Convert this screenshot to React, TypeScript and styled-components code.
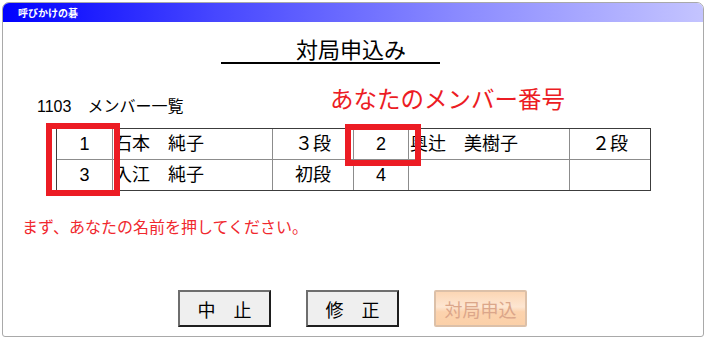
import React from "react";
import styled, { createGlobalStyle } from "styled-components";

const Global = createGlobalStyle`
  html, body { margin: 0; padding: 0; background: #ffffff; }
  body { font-family: "Liberation Sans", "Noto Sans CJK JP", sans-serif; }
  * { box-sizing: border-box; }
`;

const Page = styled.div`
  padding: 2px 0 0 2px;
`;

const Window = styled.div`
  width: 702px;
  height: 335px;
  border: 1px solid #a9a9a9;
  border-radius: 7px 7px 3px 3px;
  overflow: hidden;
  display: flex;
  flex-direction: column;
  background: #ffffff;
`;

const TitleBar = styled.div`
  height: 19px;
  flex: none;
  display: flex;
  align-items: center;
  padding-left: 15px;
  background: linear-gradient(to right, #0000ff 0%, #4646ff 30%, #8a8aff 65%, #c4c4ff 100%);
  color: #ffffff;
  font-family: "Noto Sans CJK JP", sans-serif;
  font-size: 10px;
  font-weight: bold;
  line-height: 12px;
`;

const Content = styled.div`
  flex: 1;
  display: flex;
  flex-direction: column;
  align-items: flex-start;
`;

const Heading = styled.div`
  margin: 13px 0 0 218px;
  width: 219px;
  border-bottom: 2px solid #000000;
  padding-left: 75px;
  font-family: "Noto Sans CJK JP", sans-serif;
  font-size: 22px;
  line-height: 27px;
  color: #000000;
  white-space: nowrap;
`;

const InfoRow = styled.div`
  display: flex;
  align-items: flex-start;
  margin: 20px 0 0 34px;
`;

const ListLabel = styled.div`
  width: 293px;
  margin-top: 13px;
  font-size: 16px;
  line-height: 20px;
  color: #000000;
  white-space: pre;
`;

const MemberHint = styled.div`
  font-family: "Noto Sans CJK JP", sans-serif;
  font-size: 23.5px;
  line-height: 28px;
  color: #ec1c24;
  white-space: nowrap;
`;

const TableWrap = styled.div`
  position: relative;
  margin: 11px 0 0 53px;
`;

const Grid = styled.div`
  display: grid;
  grid-template-columns: 56px 160px 81px 55px 161px 80px;
  grid-template-rows: 31px 30px;
  border: 1px solid #3c3c3c;
  width: 595px;
`;

const Cell = styled.div<{ $align: "center" | "left"; $lastCol?: boolean; $lastRow?: boolean }>`
  display: flex;
  align-items: center;
  justify-content: ${(p) => (p.$align === "center" ? "center" : "flex-start")};
  padding-left: ${(p) => (p.$align === "left" ? "1px" : "0")};
  border-right: ${(p) => (p.$lastCol ? "none" : "1px solid #8c8c8c")};
  border-bottom: ${(p) => (p.$lastRow ? "none" : "1px solid #8c8c8c")};
  font-size: 18px;
  line-height: 22px;
  color: #000000;
  white-space: pre;
`;

const Highlight = styled.div<{ $left: number; $top: number; $w: number; $h: number }>`
  position: absolute;
  left: ${(p) => p.$left}px;
  top: ${(p) => p.$top}px;
  width: ${(p) => p.$w}px;
  height: ${(p) => p.$h}px;
  border: 6px solid #ec1c24;
  pointer-events: none;
`;

const Message = styled.div`
  margin: 25px 0 0 19px;
  font-family: "Noto Sans CJK JP", sans-serif;
  font-size: 16px;
  line-height: 20px;
  color: #f0282e;
  white-space: nowrap;
`;

const ButtonRow = styled.div`
  display: flex;
  gap: 35px;
  margin: 54px 0 0 175px;
`;

const Button = styled.button<{ $disabled?: boolean }>`
  width: 93px;
  height: 37px;
  padding: 0;
  border: 2px solid;
  border-color: ${(p) =>
    p.$disabled ? "#dcc0a8" : "#6e6e6e #1e1e1e #1e1e1e #6e6e6e"};
  border-radius: ${(p) => (p.$disabled ? "2px" : "0")};
  background: ${(p) =>
    p.$disabled
      ? "linear-gradient(to bottom, #fcd6b4 0%, #fde6d2 45%, #fcd3ae 60%, #fbd0a8 100%)"
      : "#efefef"};
  color: ${(p) => (p.$disabled ? "#dba68a" : "#000000")};
  font-family: "Noto Sans CJK JP", sans-serif;
  font-size: 18px;
  line-height: 22px;
  white-space: pre;
  cursor: ${(p) => (p.$disabled ? "default" : "pointer")};
`;

type Member = { no: string; name: string; rank: string };

const rows: Member[][] = [
  [
    { no: "1", name: "石本　純子", rank: "３段" },
    { no: "2", name: "奥辻　美樹子", rank: "２段" },
  ],
  [
    { no: "3", name: "入江　純子", rank: "初段" },
    { no: "4", name: "", rank: "" },
  ],
];

export default function App() {
  return (
    <>
      <Global />
      <Page>
        <Window>
          <TitleBar>呼びかけの碁</TitleBar>
          <Content>
            <Heading>対局申込み</Heading>
            <InfoRow>
              <ListLabel>{"1103　メンバー一覧"}</ListLabel>
              <MemberHint>あなたのメンバー番号</MemberHint>
            </InfoRow>
            <TableWrap>
              <Grid>
                {rows.map((row, ri) =>
                  row.flatMap((m, mi) => {
                    const lastRow = ri === rows.length - 1;
                    const lastPair = mi === row.length - 1;
                    return [
                      <Cell key={`${ri}-${mi}-n`} $align="center" $lastRow={lastRow}>
                        {m.no}
                      </Cell>,
                      <Cell key={`${ri}-${mi}-m`} $align="left" $lastRow={lastRow}>
                        {m.name}
                      </Cell>,
                      <Cell
                        key={`${ri}-${mi}-r`}
                        $align="center"
                        $lastRow={lastRow}
                        $lastCol={lastPair}
                      >
                        {m.rank}
                      </Cell>,
                    ];
                  })
                )}
              </Grid>
              <Highlight $left={-10} $top={-5} $w={74} $h={73} />
              <Highlight $left={289} $top={-4} $w={76} $h={42} />
            </TableWrap>
            <Message>まず、あなたの名前を押してください。</Message>
            <ButtonRow>
              <Button>{"中　止"}</Button>
              <Button>{"修　正"}</Button>
              <Button $disabled disabled>
                対局申込
              </Button>
            </ButtonRow>
          </Content>
        </Window>
      </Page>
    </>
  );
}
